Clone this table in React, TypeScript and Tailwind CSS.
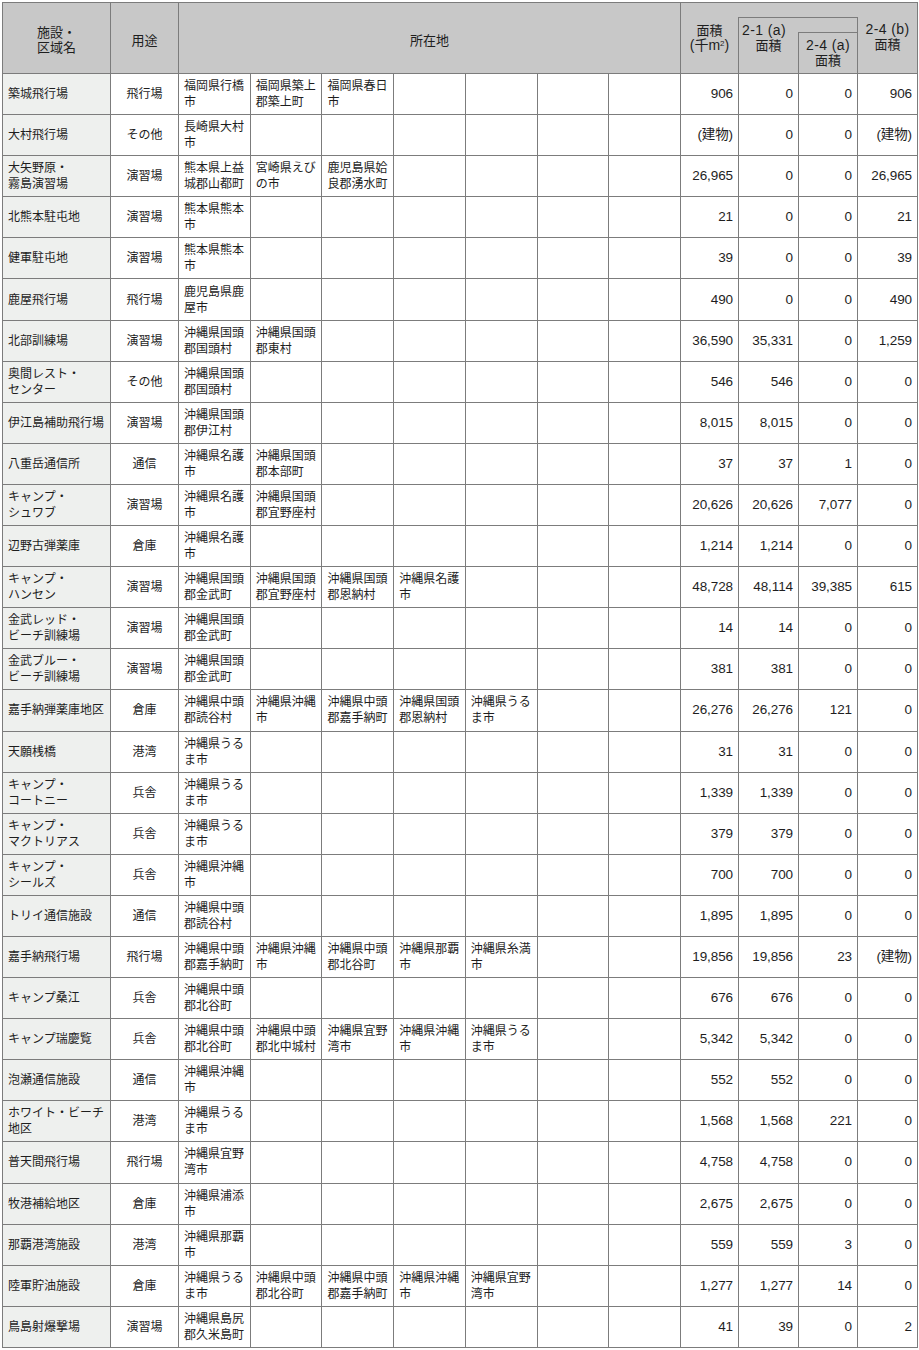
import React from 'react';

type Row = { name: string; use: string; loc: string[]; v: string[] };

const rows: Row[] = [
  { name: '築城飛行場', use: '飛行場', loc: ['福岡県行橋市', '福岡県築上郡築上町', '福岡県春日市'], v: ['906', '0', '0', '906'] },
  { name: '大村飛行場', use: 'その他', loc: ['長崎県大村市'], v: ['(建物)', '0', '0', '(建物)'] },
  { name: '大矢野原・\n霧島演習場', use: '演習場', loc: ['熊本県上益城郡山都町', '宮崎県えびの市', '鹿児島県姶良郡湧水町'], v: ['26,965', '0', '0', '26,965'] },
  { name: '北熊本駐屯地', use: '演習場', loc: ['熊本県熊本市'], v: ['21', '0', '0', '21'] },
  { name: '健軍駐屯地', use: '演習場', loc: ['熊本県熊本市'], v: ['39', '0', '0', '39'] },
  { name: '鹿屋飛行場', use: '飛行場', loc: ['鹿児島県鹿屋市'], v: ['490', '0', '0', '490'] },
  { name: '北部訓練場', use: '演習場', loc: ['沖縄県国頭郡国頭村', '沖縄県国頭郡東村'], v: ['36,590', '35,331', '0', '1,259'] },
  { name: '奥間レスト・\nセンター', use: 'その他', loc: ['沖縄県国頭郡国頭村'], v: ['546', '546', '0', '0'] },
  { name: '伊江島補助飛行場', use: '演習場', loc: ['沖縄県国頭郡伊江村'], v: ['8,015', '8,015', '0', '0'] },
  { name: '八重岳通信所', use: '通信', loc: ['沖縄県名護市', '沖縄県国頭郡本部町'], v: ['37', '37', '1', '0'] },
  { name: 'キャンプ・\nシュワブ', use: '演習場', loc: ['沖縄県名護市', '沖縄県国頭郡宜野座村'], v: ['20,626', '20,626', '7,077', '0'] },
  { name: '辺野古弾薬庫', use: '倉庫', loc: ['沖縄県名護市'], v: ['1,214', '1,214', '0', '0'] },
  { name: 'キャンプ・\nハンセン', use: '演習場', loc: ['沖縄県国頭郡金武町', '沖縄県国頭郡宜野座村', '沖縄県国頭郡恩納村', '沖縄県名護市'], v: ['48,728', '48,114', '39,385', '615'] },
  { name: '金武レッド・\nビーチ訓練場', use: '演習場', loc: ['沖縄県国頭郡金武町'], v: ['14', '14', '0', '0'] },
  { name: '金武ブルー・\nビーチ訓練場', use: '演習場', loc: ['沖縄県国頭郡金武町'], v: ['381', '381', '0', '0'] },
  { name: '嘉手納弾薬庫地区', use: '倉庫', loc: ['沖縄県中頭郡読谷村', '沖縄県沖縄市', '沖縄県中頭郡嘉手納町', '沖縄県国頭郡恩納村', '沖縄県うるま市'], v: ['26,276', '26,276', '121', '0'] },
  { name: '天願桟橋', use: '港湾', loc: ['沖縄県うるま市'], v: ['31', '31', '0', '0'] },
  { name: 'キャンプ・\nコートニー', use: '兵舎', loc: ['沖縄県うるま市'], v: ['1,339', '1,339', '0', '0'] },
  { name: 'キャンプ・\nマクトリアス', use: '兵舎', loc: ['沖縄県うるま市'], v: ['379', '379', '0', '0'] },
  { name: 'キャンプ・\nシールズ', use: '兵舎', loc: ['沖縄県沖縄市'], v: ['700', '700', '0', '0'] },
  { name: 'トリイ通信施設', use: '通信', loc: ['沖縄県中頭郡読谷村'], v: ['1,895', '1,895', '0', '0'] },
  { name: '嘉手納飛行場', use: '飛行場', loc: ['沖縄県中頭郡嘉手納町', '沖縄県沖縄市', '沖縄県中頭郡北谷町', '沖縄県那覇市', '沖縄県糸満市'], v: ['19,856', '19,856', '23', '(建物)'] },
  { name: 'キャンプ桑江', use: '兵舎', loc: ['沖縄県中頭郡北谷町'], v: ['676', '676', '0', '0'] },
  { name: 'キャンプ瑞慶覧', use: '兵舎', loc: ['沖縄県中頭郡北谷町', '沖縄県中頭郡北中城村', '沖縄県宜野湾市', '沖縄県沖縄市', '沖縄県うるま市'], v: ['5,342', '5,342', '0', '0'] },
  { name: '泡瀬通信施設', use: '通信', loc: ['沖縄県沖縄市'], v: ['552', '552', '0', '0'] },
  { name: 'ホワイト・ビーチ\n地区', use: '港湾', loc: ['沖縄県うるま市'], v: ['1,568', '1,568', '221', '0'] },
  { name: '普天間飛行場', use: '飛行場', loc: ['沖縄県宜野湾市'], v: ['4,758', '4,758', '0', '0'] },
  { name: '牧港補給地区', use: '倉庫', loc: ['沖縄県浦添市'], v: ['2,675', '2,675', '0', '0'] },
  { name: '那覇港湾施設', use: '港湾', loc: ['沖縄県那覇市'], v: ['559', '559', '3', '0'] },
  { name: '陸軍貯油施設', use: '倉庫', loc: ['沖縄県うるま市', '沖縄県中頭郡北谷町', '沖縄県中頭郡嘉手納町', '沖縄県沖縄市', '沖縄県宜野湾市'], v: ['1,277', '1,277', '14', '0'] },
  { name: '鳥島射爆撃場', use: '演習場', loc: ['沖縄県島尻郡久米島町'], v: ['41', '39', '0', '2'] },
];

const HeaderRow = () => (
  <div className="flex h-[71px] bg-[#c8c8c8] border-b border-[#7c7c7c] text-[13px] leading-[15px]">
    <div className="w-[108px] shrink-0 border-r border-[#7c7c7c] flex items-center justify-center text-center pt-[3px]">
      施設・<br />区域名
    </div>
    <div className="w-[68px] shrink-0 border-r border-[#7c7c7c] flex items-center justify-center pt-[4px]">用途</div>
    <div className="w-[502px] shrink-0 border-r border-[#7c7c7c] flex items-center justify-center pt-[4px]">所在地</div>
    <div className="flex-1 flex flex-col">
      <div className="h-[14px] shrink-0" />
      <div className="flex flex-1">
        <div className="w-[57px] shrink-0 text-center pt-[6px]">
          面積<br />
          <span className="text-[14px]">(千m<sup className="text-[8px]">2</sup>)</span>
        </div>
        <div className="w-[120px] shrink-0 border-l border-t border-r border-[#7c7c7c] flex">
          <div className="w-[59px] shrink-0 pt-[5px]">
            <div className="pl-[3px] whitespace-nowrap text-[14px] tracking-[0.4px]">2-1 (a)</div>
            <div className="text-center">面積</div>
          </div>
          <div className="flex-1 flex flex-col">
            <div className="h-[14px] shrink-0" />
            <div className="flex-1 border-l border-t border-[#7c7c7c] text-center pt-[5px] whitespace-nowrap">
              <span className="text-[14px] tracking-[0.4px]">2-4 (a)</span>
              <br />面積
            </div>
          </div>
        </div>
        <div className="flex-1 text-center pt-[5px] whitespace-nowrap">
          <span className="text-[14px] tracking-[0.4px]">2-4 (b)</span>
          <br />面積
        </div>
      </div>
    </div>
  </div>
);

export default function App() {
  return (
    <div className="bg-white min-h-[1350px] pt-[2px] pl-[2px]">
      <div className="w-[916px] border-l border-r border-t border-[#7c7c7c] text-[#1e1e1e] font-['Liberation_Sans','Noto_Sans_CJK_JP',sans-serif]">
        <HeaderRow />
        <div className="grid grid-cols-[108px_68px_repeat(7,minmax(0,1fr))_58px_60px_59px_59px] auto-rows-[41.1px] text-[12px] leading-[16px]">
          {rows.map((r, i) => {
            const locs = [...r.loc, ...Array(7 - r.loc.length).fill('')];
            return (
              <React.Fragment key={i}>
                <div className="bg-[#eef0ee] border-r border-b border-[#7c7c7c] pl-[5px] flex items-center whitespace-pre-line">
                  {r.name}
                </div>
                <div className="border-r border-b border-[#7c7c7c] flex items-center justify-center">{r.use}</div>
                {locs.map((l, j) => (
                  <div key={j} className="border-r border-b border-[#7c7c7c] pl-[5px] pr-[2px] flex items-center">
                    {l}
                  </div>
                ))}
                {r.v.map((n, k) => (
                  <div
                    key={k}
                    className={
                      k === 3
                        ? 'border-b border-[#7c7c7c] pr-[5px] flex items-center justify-end text-[13.5px] tracking-[-0.1px]'
                        : 'border-r border-b border-[#7c7c7c] pr-[5px] flex items-center justify-end text-[13.5px] tracking-[-0.1px]'
                    }
                  >
                    {n}
                  </div>
                ))}
              </React.Fragment>
            );
          })}
        </div>
      </div>
    </div>
  );
}
